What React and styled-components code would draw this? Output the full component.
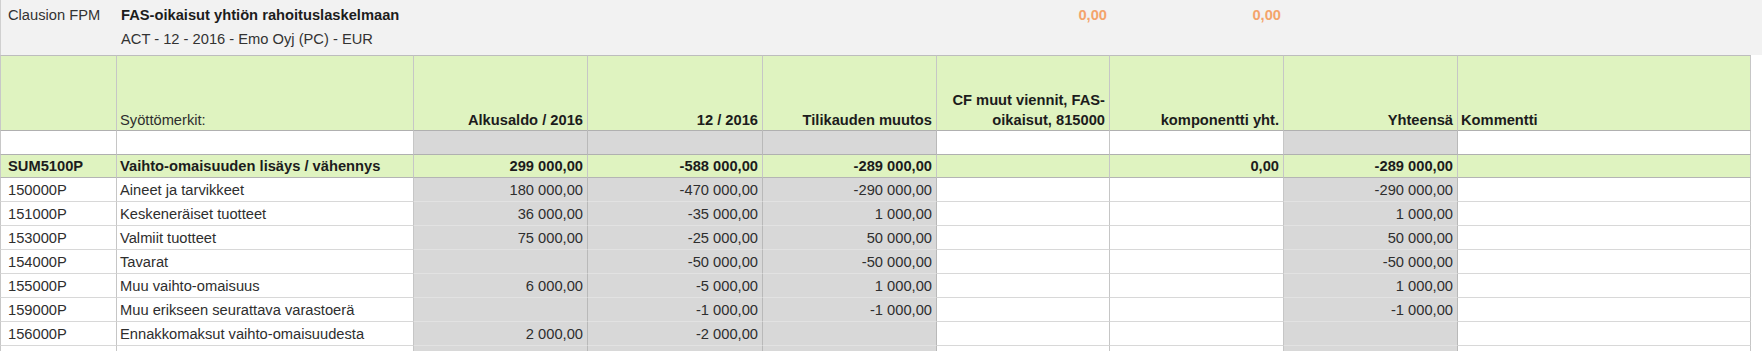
import React from 'react'
import styled, { createGlobalStyle } from 'styled-components'

const GlobalStyle = createGlobalStyle`
  body {
    margin: 0;
    background: #fff;
    font-family: "Liberation Sans", Arial, sans-serif;
    font-size: 14.7px;
    color: #2a2a2a;
  }
`

const COLUMNS = '117px 297px 174px 175px 174px 173px 174px 174px 293px'
const GREY_COLS = [2, 3, 4, 7]

const tones = {
  green: '#dff3c0',
  grey: '#d8d8d8',
  white: '#ffffff',
}

const Page = styled.div`
  width: 1762px;
  height: 351px;
  overflow: hidden;
`

const Band = styled.div`
  display: grid;
  grid-template-columns: ${COLUMNS};
  grid-template-rows: 24px 25px;
  padding-top: 3px;
  height: 55px;
  box-sizing: border-box;
  background: #f2f2f2;
  border-left: 1px solid #d0d0d0;
`

const BandCell = styled.div`
  line-height: ${p => (p.$second ? '25px' : '24px')};
  padding: 0 4px 0 ${p => (p.$first ? '7px' : '3px')};
  grid-column: ${p => p.$span || 'auto'};
  text-align: ${p => (p.$right ? 'right' : 'left')};
  font-weight: ${p => (p.$bold ? 700 : 400)};
  color: ${p => (p.$orange ? '#f4a46c' : p.$bold ? '#1c1c1c' : '#333')};
  white-space: nowrap;
`

const Row = styled.div`
  display: grid;
  grid-template-columns: ${COLUMNS};
  height: ${p => p.$height}px;
`

const Cell = styled.div`
  box-sizing: border-box;
  background: ${p => tones[p.$tone]};
  border-right: 1px solid ${p => (p.$tone === 'grey' ? '#b9b9b9' : '#c6c6c6')};
  border-bottom: 1px solid ${p => p.$line};
  border-top: ${p => (p.$top ? '1px solid #bdbdbd' : 'none')};
  border-left: ${p => (p.$first ? '1px solid #c8c8c8' : 'none')};
  padding: 0 4px 0 ${p => (p.$first ? '7px' : '3px')};
  display: flex;
  align-items: ${p => (p.$bottom ? 'flex-end' : 'center')};
  justify-content: ${p => (p.$right ? 'flex-end' : 'flex-start')};
  text-align: ${p => (p.$right ? 'right' : 'left')};
  font-weight: ${p => (p.$bold ? 700 : 400)};
  color: ${p => (p.$bold ? '#1c1c1c' : '#2e2e2e')};
  line-height: ${p => (p.$bottom ? '20px' : 'normal')};
  white-space: nowrap;
  overflow: hidden;
`

const headers = [
  { text: '' },
  { text: 'Syöttömerkit:' },
  { text: 'Alkusaldo / 2016', bold: true, right: true },
  { text: '12 / 2016', bold: true, right: true },
  { text: 'Tilikauden muutos', bold: true, right: true },
  { text: ['CF muut viennit, FAS-', 'oikaisut, 815000'], bold: true, right: true },
  { text: 'komponentti yht.', bold: true, right: true },
  { text: 'Yhteensä', bold: true, right: true },
  { text: 'Kommentti', bold: true },
]

const sumRow = [
  'SUM5100P',
  'Vaihto-omaisuuden lisäys / vähennys',
  '299 000,00',
  '-588 000,00',
  '-289 000,00',
  '',
  '0,00',
  '-289 000,00',
  '',
]

const rows = [
  ['150000P', 'Aineet ja tarvikkeet', '180 000,00', '-470 000,00', '-290 000,00', '', '', '-290 000,00', ''],
  ['151000P', 'Keskeneräiset tuotteet', '36 000,00', '-35 000,00', '1 000,00', '', '', '1 000,00', ''],
  ['153000P', 'Valmiit tuotteet', '75 000,00', '-25 000,00', '50 000,00', '', '', '50 000,00', ''],
  ['154000P', 'Tavarat', '', '-50 000,00', '-50 000,00', '', '', '-50 000,00', ''],
  ['155000P', 'Muu vaihto-omaisuus', '6 000,00', '-5 000,00', '1 000,00', '', '', '1 000,00', ''],
  ['159000P', 'Muu erikseen seurattava varastoerä', '', '-1 000,00', '-1 000,00', '', '', '-1 000,00', ''],
  ['156000P', 'Ennakkomaksut vaihto-omaisuudesta', '2 000,00', '-2 000,00', '', '', '', '', ''],
  ['', '', '', '', '', '', '', '', ''],
]

const isNumber = i => i >= 2 && i <= 7

function DataRow({ cells, height = 24, line }) {
  return (
    <Row $height={height}>
      {cells.map((c, i) => {
        const tone = GREY_COLS.includes(i) ? 'grey' : 'white'
        return (
          <Cell
            key={i}
            $tone={tone}
            $first={i === 0}
            $right={isNumber(i)}
            $line={line || (tone === 'grey' ? '#e2e2e2' : '#d8d8d8')}
          >
            {c}
          </Cell>
        )
      })}
    </Row>
  )
}

export default function App() {
  return (
    <Page>
      <GlobalStyle />
      <Band>
        <BandCell $first>Clausion FPM</BandCell>
        <BandCell $bold $span="2 / 6">FAS-oikaisut yhtiön rahoituslaskelmaan</BandCell>
        <BandCell $bold $orange $right>0,00</BandCell>
        <BandCell $bold $orange $right>0,00</BandCell>
        <BandCell $span="8 / 10" />
        <BandCell $second />
        <BandCell $second $span="2 / 6">ACT - 12 - 2016 - Emo Oyj (PC) - EUR</BandCell>
      </Band>

      <Row $height={76}>
        {headers.map((h, i) => (
          <Cell
            key={i}
            $tone="green"
            $top
            $bottom
            $first={i === 0}
            $bold={h.bold}
            $right={h.right}
            $line="#b0b0b0"
          >
            {Array.isArray(h.text) ? (
              <span>
                {h.text[0]}
                <br />
                {h.text[1]}
              </span>
            ) : (
              h.text
            )}
          </Cell>
        ))}
      </Row>

      <DataRow cells={Array(9).fill('')} line="#b0b0b0" />

      <Row $height={23}>
        {sumRow.map((c, i) => (
          <Cell key={i} $tone="green" $first={i === 0} $bold $right={isNumber(i)} $line="#b4b4b4">
            {c}
          </Cell>
        ))}
      </Row>

      {rows.map((r, i) => (
        <DataRow key={i} cells={r} />
      ))}
    </Page>
  )
}
